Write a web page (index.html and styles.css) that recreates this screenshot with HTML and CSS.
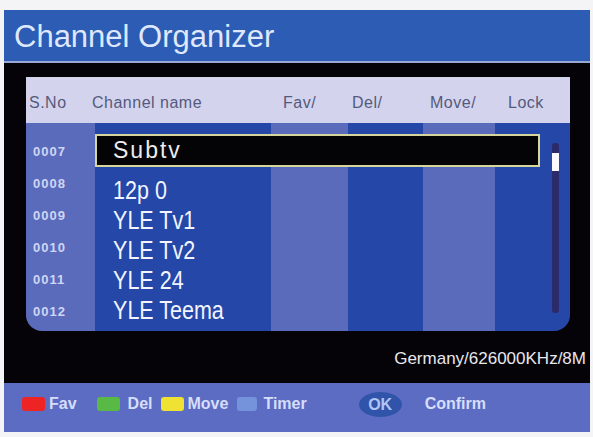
FILE: index.html
```html
<!DOCTYPE html>
<html lang="en">
<head>
    <meta charset="UTF-8">
    <title>Channel Organizer</title>
    <link rel="stylesheet" href="styles.css">
</head>
<body>
    <div class="screen">
        <!-- Barre de titre -->
        <div class="title-bar">
            <h1>Channel Organizer</h1>
        </div>

        <div class="main">
            <div class="panel">
                <div class="head">
                    <span>S.No</span>
                    <span>Channel name</span>
                    <span>Fav/</span>
                    <span>Del/</span>
                    <span>Move/</span>
                    <span>Lock</span>
                </div>

                <div class="list">
                    <div class="nums">
                        <div>0007</div>
                        <div>0008</div>
                        <div>0009</div>
                        <div>0010</div>
                        <div>0011</div>
                        <div>0012</div>
                    </div>
                    <div class="names">
                        <div class="current">Subtv</div>
                        <div class="name first">12p 0</div>
                        <div class="name">YLE Tv1</div>
                        <div class="name">YLE Tv2</div>
                        <div class="name">YLE 24</div>
                        <div class="name">YLE Teema</div>
                    </div>
                    <div class="scrollbar">
                        <div class="thumb"></div>
                    </div>
                </div>
            </div>

            <div class="tuner">Germany/626000KHz/8M</div>
        </div>

        <!-- Légende des touches -->
        <div class="footer">
            <span class="key red"></span><span class="label fav">Fav</span>
            <span class="key green"></span><span class="label del">Del</span>
            <span class="key yellow"></span><span class="label move">Move</span>
            <span class="key blue"></span><span class="label timer">Timer</span>
            <span class="ok">OK</span><span class="label">Confirm</span>
        </div>
    </div>
</body>
</html>
```

FILE: styles.css
```css
body {
    margin: 0;
    padding: 10px 0 0 4px;
    background: #f4f4f6;
    font-family: 'Liberation Sans', Arial, sans-serif;
}

/* Cadre principal */
.screen {
    width: 586px;
    height: 422px;
    display: flex;
    flex-direction: column;
}

/* Barre de titre */
.title-bar {
    height: 53px;
    background: #2c5cb3;
    border-bottom: 2px solid #9aa8d4;
    box-sizing: border-box;
    display: flex;
    align-items: center;
    padding-left: 10px;
}

.title-bar h1 {
    margin: 0;
    font-size: 31px;
    font-weight: normal;
    color: #dfe8fc;
    padding-top: 2px;
}

/* Zone noire */
.main {
    height: 320px;
    background: #050308;
    padding: 14px 0 0 22px;
    box-sizing: border-box;
}

.panel {
    width: 544px;
}

/* En-tête des colonnes */
.head {
    height: 46px;
    background: #d3d3ee;
    display: grid;
    grid-template-columns: 63px 191px 69px 78px 78px auto;
    align-items: center;
    padding: 6px 0 0 3px;
    box-sizing: border-box;
    font-size: 16px;
    letter-spacing: 0.5px;
    color: #555a7c;
}

/* Liste des chaînes */
.list {
    height: 208px;
    display: flex;
    border-radius: 0 0 16px 16px;
    background: linear-gradient(to right,
        #5a6bbc 0, #5a6bbc 69px,
        #2447a8 69px, #2447a8 245px,
        #5a6bbc 245px, #5a6bbc 322px,
        #2447a8 322px, #2447a8 397px,
        #5a6bbc 397px, #5a6bbc 469px,
        #2447a8 469px);
}

.nums {
    width: 69px;
    padding: 13px 0 0 7px;
    box-sizing: border-box;
    font-size: 13px;
    font-weight: bold;
    line-height: 32px;
    letter-spacing: 1px;
    color: #d0d5f2;
}

.names {
    width: 445px;
}

.current {
    margin-top: 11px;
    height: 33px;
    box-sizing: border-box;
    border: 2px solid #d6d69c;
    background: #040306;
    padding-left: 16px;
    font-size: 23px;
    line-height: 28px;
    letter-spacing: 2px;
    color: #ecebee;
}

/* Police étroite simulée */
.name {
    padding-left: 21px;
    font-size: 25px;
    line-height: 30px;
    color: #f2f4ff;
    transform: scaleX(0.86);
    transform-origin: left center;
}

.name.first {
    margin-top: 8px;
}

/* Barre de défilement */
.scrollbar {
    width: 7px;
    height: 170px;
    margin: 20px 0 0 12px;
    border-radius: 3px;
    background: #2b2b6c;
}

.thumb {
    width: 7px;
    height: 18px;
    margin-top: 10px;
    background: #fafaff;
}

.tuner {
    margin-top: 18px;
    padding-right: 4px;
    text-align: right;
    font-size: 17px;
    line-height: 20px;
    color: #e8e8ec;
}

/* Légende en bas */
.footer {
    height: 49px;
    background: #5c6cc3;
    display: flex;
    align-items: center;
    padding: 0 0 7px 18px;
    box-sizing: border-box;
    font-size: 16px;
    font-weight: bold;
    color: #d6defc;
}

.key {
    width: 23px;
    height: 14px;
    border-radius: 3px;
}

.red { background: #ee2424; }
.green { background: #58b944; margin-left: 20px; }
.yellow { background: #f0e232; margin-left: 9px; }
.blue { background: #7493da; margin-left: 9px; width: 20px; }

.label {
    margin-left: 4px;
}

.del { margin-left: 8px; }
.move { margin-left: 3px; }
.timer { margin-left: 6px; }

.ok {
    width: 43px;
    height: 25px;
    margin: 0 19px 0 52px;
    border-radius: 50%;
    background: #2f54a9;
    color: #b2c4f2;
    text-align: center;
    line-height: 25px;
}
```
